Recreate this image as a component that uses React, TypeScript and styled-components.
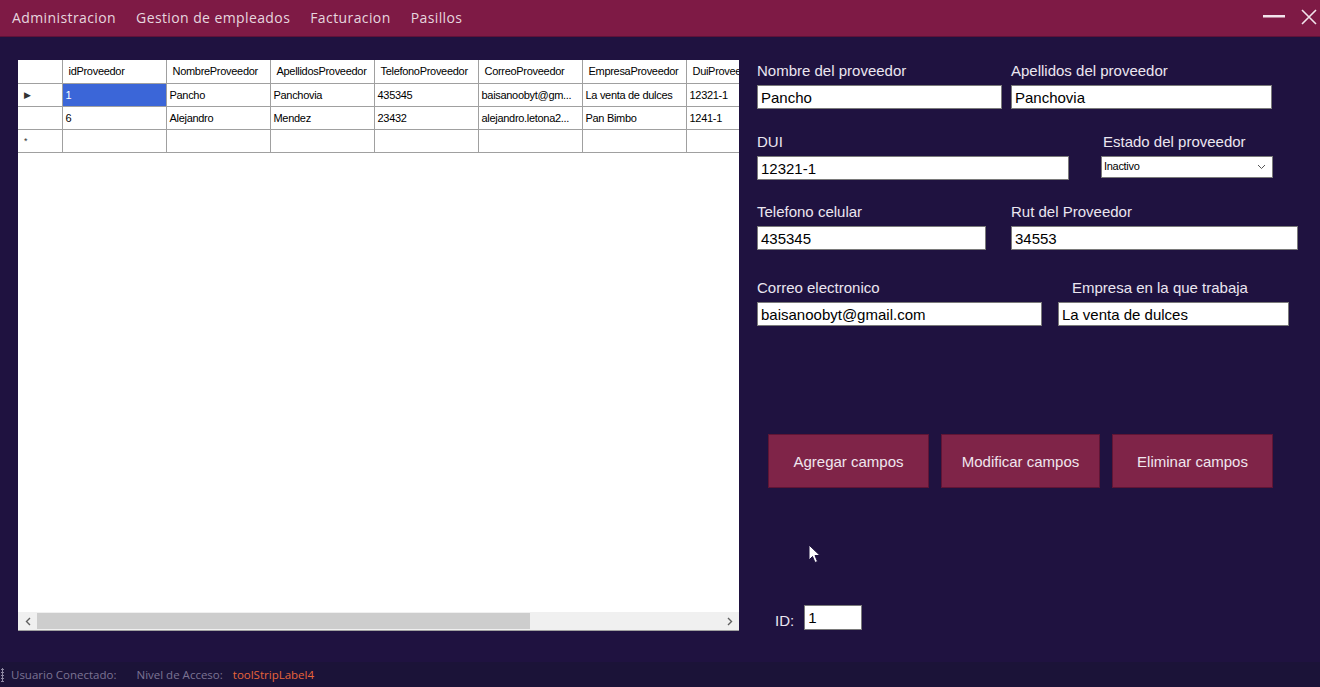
import React from "react";
import styled, { createGlobalStyle } from "styled-components";

const Global = createGlobalStyle`
  html, body { margin: 0; padding: 0; }
  body { width: 1320px; height: 687px; overflow: hidden; background: #1f1240; }
  * { box-sizing: border-box; }
`;

const Shell = styled.div`
  width: 1320px;
  height: 687px;
  display: flex;
  flex-direction: column;
  background: #1f1240;
  font-family: "Liberation Sans", Arial, sans-serif;
`;

const TitleBar = styled.div`
  height: 37px;
  background: #7e1a45;
  border-bottom: 1px solid #5e1238;
  display: flex;
  align-items: center;
  padding: 0 0 2px 12px;
`;

const MenuItem = styled.span`
  font-family: "Open Sans", "Noto Sans", sans-serif;
  font-size: 14px;
  color: #e6d6df;
  margin-right: 20px;
  letter-spacing: 0.4px;
`;

const WindowButtons = styled.div`
  margin-left: auto;
  display: flex;
  align-items: center;
  gap: 14px;
  padding-right: 2px;
`;

const Main = styled.div`
  flex: 1;
  display: flex;
  position: relative;
`;

const GridPanel = styled.div`
  margin: 23px 0 0 18px;
  width: 721px;
  min-width: 721px;
  height: 571px;
  background: #ffffff;
  display: flex;
  flex-direction: column;
  border-bottom: 1px solid #a0a0a0;
`;

const GridBody = styled.div`
  flex: 1;
  overflow: hidden;
`;

const Table = styled.table`
  width: 772px;
  border-collapse: collapse;
  table-layout: fixed;
  font-family: "Liberation Sans", Arial, sans-serif;
  font-size: 11px;
  color: #000;
`;

const HeadCell = styled.th<{ $w: number; $first?: boolean }>`
  width: ${(p) => p.$w}px;
  height: 23px;
  font-weight: normal;
  text-align: left;
  padding: 0 0 0 6px;
  border: 1px solid #a0a0a0;
  border-top: none;
  ${(p) => (p.$first ? "border-left: none;" : "")}
  white-space: nowrap;
  overflow: hidden;
  letter-spacing: -0.3px;
`;

const RowHead = styled.td`
  height: 23px;
  border: 1px solid #a0a0a0;
  border-left: none;
  font-size: 9px;
  padding-left: 6px;
  color: #333;
`;

const Cell = styled.td<{ $sel?: boolean }>`
  height: 23px;
  padding: 0 0 0 3px;
  border: 1px solid #a0a0a0;
  white-space: nowrap;
  overflow: hidden;
  background: ${(p) => (p.$sel ? "#3b66d8" : "#fff")};
  color: ${(p) => (p.$sel ? "#fff" : "#000")};
  letter-spacing: -0.3px;
`;

const HScroll = styled.div`
  height: 18px;
  background: #f0f0f0;
  display: flex;
  align-items: center;
`;

const ScrollArrow = styled.div`
  width: 19px;
  height: 18px;
  display: flex;
  align-items: center;
  justify-content: center;
  color: #606060;
`;

const ScrollTrack = styled.div`
  flex: 1;
  height: 16px;
  display: flex;
`;

const ScrollThumb = styled.div`
  width: 493px;
  height: 16px;
  background: #cdcdcd;
`;

const FormPanel = styled.div`
  margin-left: 18px;
  display: flex;
  flex-direction: column;
  flex: 1;
  position: relative;
`;

const FieldRow = styled.div<{ $top: number }>`
  display: flex;
  margin-top: ${(p) => p.$top}px;
`;

const Field = styled.div<{ $w: number; $ml?: number }>`
  width: ${(p) => p.$w}px;
  margin-left: ${(p) => p.$ml ?? 0}px;
  display: flex;
  flex-direction: column;
`;

const Label = styled.label<{ $pl?: number }>`
  font-size: 15px;
  color: #ebe6f0;
  height: 20px;
  line-height: 20px;
  padding-left: ${(p) => p.$pl ?? 0}px;
  white-space: nowrap;
  margin-bottom: 4px;
`;

const Input = styled.div`
  height: 24px;
  background: #fff;
  border: 1px solid #7a7a7a;
  font-size: 15px;
  color: #000;
  padding-left: 3px;
  display: flex;
  align-items: center;
  white-space: nowrap;
  overflow: hidden;
`;

const Select = styled.div`
  height: 22px;
  background: #fff;
  border: 1px solid #7a7a7a;
  font-size: 11px;
  color: #000;
  padding: 3px 6px 0 2px;
  display: flex;
  align-items: flex-start;
  justify-content: space-between;
  letter-spacing: -0.3px;
`;

const ButtonRow = styled.div`
  display: flex;
  margin-top: 108px;
  margin-left: 11px;
  gap: 12px;
`;

const ActionButton = styled.div<{ $w: number }>`
  width: ${(p) => p.$w}px;
  height: 54px;
  background: #7f2448;
  border: 1px solid #5f1535;
  color: #f0e6ee;
  font-size: 15px;
  display: flex;
  align-items: center;
  justify-content: center;
`;

const IdRow = styled.div`
  display: flex;
  align-items: flex-end;
  margin-top: 117px;
  margin-left: 18px;
  gap: 10px;
`;

const IdLabel = styled.span`
  font-size: 15px;
  color: #ebe6f0;
  padding-bottom: 1px;
`;

const IdInput = styled.div`
  width: 58px;
  height: 25px;
  background: #fff;
  border: 1px solid #7a7a7a;
  font-size: 15px;
  padding-left: 3px;
  display: flex;
  align-items: center;
`;

const Cursor = styled.svg`
  position: absolute;
  left: 51px;
  top: 507px;
`;

const StatusBar = styled.div`
  height: 25px;
  background: #1b1338;
  display: flex;
  align-items: center;
  font-family: "Open Sans", "Noto Sans", sans-serif;
  font-size: 11.5px;
  color: #7b7394;
`;

const Grip = styled.div`
  width: 3px;
  height: 14px;
  margin: 0 7px 0 1px;
  background-image: radial-gradient(circle, #8c86a0 1px, transparent 1.2px);
  background-size: 3px 3px;
`;

const StatusText = styled.span<{ $accent?: boolean; $mr?: number }>`
  color: ${(p) => (p.$accent ? "#e8643a" : "#7b7394")};
  margin-right: ${(p) => p.$mr ?? 0}px;
`;

const cols = [
  { name: "idProveedor", w: 104 },
  { name: "NombreProveedor", w: 104 },
  { name: "ApellidosProveedor", w: 104 },
  { name: "TelefonoProveedor", w: 104 },
  { name: "CorreoProveedor", w: 104 },
  { name: "EmpresaProveedor", w: 104 },
  { name: "DuiProveedor", w: 104 },
];

const rows = [
  ["1", "Pancho", "Panchovia", "435345", "baisanoobyt@gm...", "La venta de dulces", "12321-1"],
  ["6", "Alejandro", "Mendez", "23432", "alejandro.letona2...", "Pan Bimbo", "1241-1"],
];

export default function App() {
  return (
    <>
      <Global />
      <Shell>
        <TitleBar>
          <MenuItem>Administracion</MenuItem>
          <MenuItem>Gestion de empleados</MenuItem>
          <MenuItem>Facturacion</MenuItem>
          <MenuItem>Pasillos</MenuItem>
          <WindowButtons>
            <svg width="24" height="18" viewBox="0 0 24 18">
              <rect x="1" y="7" width="22" height="2.5" fill="#f2e4ec" />
            </svg>
            <svg width="18" height="18" viewBox="0 0 18 18">
              <path d="M2 2 L16 16 M16 2 L2 16" stroke="#f2e4ec" strokeWidth="1.6" />
            </svg>
          </WindowButtons>
        </TitleBar>
        <Main>
          <GridPanel>
            <GridBody>
              <Table>
                <thead>
                  <tr>
                    <HeadCell $w={44} $first />
                    {cols.map((c) => (
                      <HeadCell key={c.name} $w={c.w}>
                        {c.name}
                      </HeadCell>
                    ))}
                  </tr>
                </thead>
                <tbody>
                  {rows.map((r, i) => (
                    <tr key={i}>
                      <RowHead>{i === 0 ? "▶" : ""}</RowHead>
                      {r.map((v, j) => (
                        <Cell key={j} $sel={i === 0 && j === 0}>
                          {v}
                        </Cell>
                      ))}
                    </tr>
                  ))}
                  <tr>
                    <RowHead>*</RowHead>
                    {cols.map((c) => (
                      <Cell key={c.name} />
                    ))}
                  </tr>
                </tbody>
              </Table>
            </GridBody>
            <HScroll>
              <ScrollArrow>
                <svg width="6" height="9" viewBox="0 0 6 9">
                  <path d="M5 1 L1.5 4.5 L5 8" stroke="#606060" strokeWidth="1.4" fill="none" />
                </svg>
              </ScrollArrow>
              <ScrollTrack>
                <ScrollThumb />
              </ScrollTrack>
              <ScrollArrow>
                <svg width="6" height="9" viewBox="0 0 6 9">
                  <path d="M1 1 L4.5 4.5 L1 8" stroke="#606060" strokeWidth="1.4" fill="none" />
                </svg>
              </ScrollArrow>
            </HScroll>
          </GridPanel>
          <FormPanel>
            <FieldRow $top={24}>
              <Field $w={245}>
                <Label>Nombre del proveedor</Label>
                <Input>Pancho</Input>
              </Field>
              <Field $w={261} $ml={9}>
                <Label>Apellidos del proveedor</Label>
                <Input>Panchovia</Input>
              </Field>
            </FieldRow>
            <FieldRow $top={23}>
              <Field $w={312}>
                <Label>DUI</Label>
                <Input>12321-1</Input>
              </Field>
              <Field $w={172} $ml={32}>
                <Label $pl={2}>Estado del proveedor</Label>
                <Select>
                  <span>Inactivo</span>
                  <svg width="9" height="6" viewBox="0 0 9 6" style={{ marginTop: 4 }}>
                    <path d="M1 1 L4.5 4.5 L8 1" stroke="#555" strokeWidth="1" fill="none" />
                  </svg>
                </Select>
              </Field>
            </FieldRow>
            <FieldRow $top={22}>
              <Field $w={229}>
                <Label>Telefono celular</Label>
                <Input>435345</Input>
              </Field>
              <Field $w={287} $ml={25}>
                <Label>Rut del Proveedor</Label>
                <Input>34553</Input>
              </Field>
            </FieldRow>
            <FieldRow $top={28}>
              <Field $w={285}>
                <Label>Correo electronico</Label>
                <Input>baisanoobyt@gmail.com</Input>
              </Field>
              <Field $w={231} $ml={16}>
                <Label $pl={14}>Empresa en la que trabaja</Label>
                <Input>La venta de dulces</Input>
              </Field>
            </FieldRow>
            <ButtonRow>
              <ActionButton $w={161}>Agregar campos</ActionButton>
              <ActionButton $w={159}>Modificar campos</ActionButton>
              <ActionButton $w={161}>Eliminar campos</ActionButton>
            </ButtonRow>
            <IdRow>
              <IdLabel>ID:</IdLabel>
              <IdInput>1</IdInput>
            </IdRow>
            <Cursor width="14" height="20" viewBox="0 0 14 20">
              <path d="M1 1 L1 16 L4.5 12.5 L7 18.5 L9.5 17.5 L7 11.5 L12 11.5 Z" fill="#ffffff" stroke="#1f1240" strokeWidth="1" />
            </Cursor>
          </FormPanel>
        </Main>
        <StatusBar>
          <Grip />
          <StatusText $mr={20}>Usuario Conectado:</StatusText>
          <StatusText $mr={10}>Nivel de Acceso:</StatusText>
          <StatusText $accent>toolStripLabel4</StatusText>
        </StatusBar>
      </Shell>
    </>
  );
}
